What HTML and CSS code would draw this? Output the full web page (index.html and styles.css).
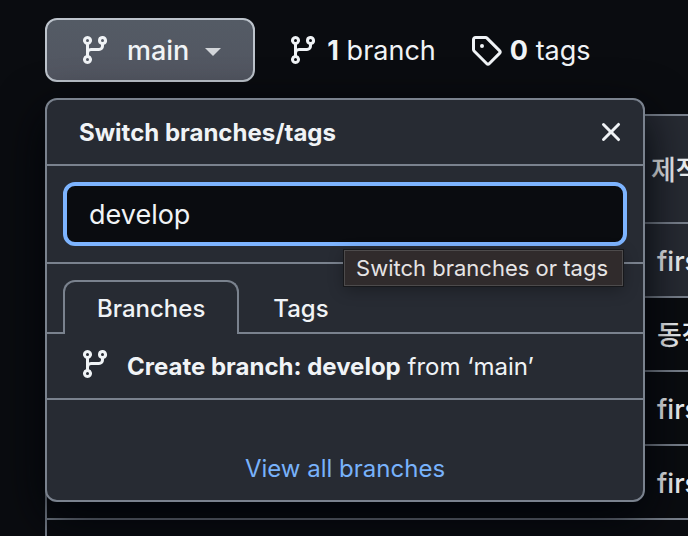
FILE: index.html
```html
<!DOCTYPE html>
<html lang="ko">
<head>
<meta charset="utf-8">
<meta name="viewport" content="width=device-width, initial-scale=1">
<title>Switch branches/tags</title>
<link rel="stylesheet" href="styles.css">
</head>
<body>
<svg class="sprite" aria-hidden="true">
  <symbol id="branch" viewBox="0 0 16 16"><path fill-rule="evenodd" d="M11.75 2.5a.75.75 0 100 1.5.75.75 0 000-1.5zm-2.25.75a2.25 2.25 0 113 2.122V6A2.5 2.5 0 0110 8.5H6a1 1 0 00-1 1v1.128a2.251 2.251 0 11-1.5 0V5.372a2.25 2.25 0 111.5 0v1.836A2.492 2.492 0 016 7h4a1 1 0 001-1v-.628A2.25 2.25 0 019.5 3.25zM4.25 12a.75.75 0 100 1.5.75.75 0 000-1.5zM3.5 3.25a.75.75 0 111.5 0 .75.75 0 01-1.5 0z"/></symbol>
  <symbol id="tag" viewBox="0 0 16 16"><path fill-rule="evenodd" d="M2.5 7.775V2.75a.25.25 0 01.25-.25h5.025a.25.25 0 01.177.073l6.25 6.25a.25.25 0 010 .354l-5.025 5.025a.25.25 0 01-.354 0l-6.25-6.25a.25.25 0 01-.073-.177zm-1.5 0V2.75C1 1.784 1.784 1 2.75 1h5.025c.464 0 .91.184 1.238.513l6.25 6.25a1.75 1.75 0 010 2.474l-5.026 5.026a1.75 1.75 0 01-2.474 0l-6.25-6.25A1.75 1.75 0 011 7.775zM6 5a1 1 0 100 2 1 1 0 000-2z"/></symbol>
  <symbol id="close" viewBox="0 0 16 16"><path fill-rule="evenodd" d="M3.72 3.72a.75.75 0 011.06 0L8 6.94l3.22-3.22a.75.75 0 111.06 1.06L9.06 8l3.22 3.22a.75.75 0 11-1.06 1.06L8 9.06l-3.22 3.22a.75.75 0 01-1.06-1.06L6.94 8 3.72 4.78a.75.75 0 010-1.06z"/></symbol>
</svg>
<main class="repo">
  <div class="toolbar">
    <button class="branch-button" type="button" aria-haspopup="true" aria-expanded="true">
      <svg class="icon"><use href="#branch"/></svg>
      <span class="label">main</span>
      <span class="caret"></span>
    </button>
    <nav class="counts">
      <a class="count" href="#branches"><svg class="icon"><use href="#branch"/></svg><span class="label"><strong>1</strong> branch</span></a>
      <a class="count" href="#tags"><svg class="icon"><use href="#tag"/></svg><span class="label"><strong>0</strong> tags</span></a>
    </nav>
  </div>

  <section class="popover" aria-labelledby="popover-title">
    <header class="popover-header">
      <h2 class="label" id="popover-title">Switch branches/tags</h2>
      <button class="close" type="button" aria-label="Close"><svg class="icon"><use href="#close"/></svg></button>
    </header>
    <div class="filter">
      <input type="text" value="develop" aria-label="Find or create a branch">
      <div class="tooltip" role="tooltip">Switch branches or tags</div>
    </div>
    <div class="tabs" role="tablist">
      <button class="tab tab-selected" type="button" role="tab" aria-selected="true">Branches</button>
      <button class="tab" type="button" role="tab" aria-selected="false">Tags</button>
    </div>
    <button class="create" type="button">
      <svg class="icon"><use href="#branch"/></svg>
      <span class="label"><strong>Create branch: develop</strong> from ‘main’</span>
    </button>
    <footer class="popover-footer"><a href="#all">View all branches</a></footer>
  </section>

  <table class="files">
    <thead>
      <tr><th class="name"></th><th class="message">제작</th></tr>
    </thead>
    <tbody>
      <tr class="shaded"><td></td><td>first</td></tr>
      <tr><td></td><td>동작</td></tr>
      <tr><td></td><td>first</td></tr>
      <tr><td></td><td>first</td></tr>
      <tr class="spacer"><td></td><td></td></tr>
    </tbody>
  </table>
</main>
</body>
</html>
```
FILE: styles.css
```css
:root {
  --bg: #0a0c10;
  --panel: #272b33;
  --line: #7a828e;
  --text: #f0f3f6;
  --accent: #78b2fb;
  --focus: #7db4ff;
}

* { box-sizing: border-box; }

html, body { height: 100%; overflow: hidden; }

body {
  margin: 0;
  background: var(--bg);
  color: var(--text);
  font-family: Inter, "Noto Sans CJK KR", sans-serif;
  font-size: 24px;
  line-height: 32px;
}

button, input { font: inherit; color: inherit; }

button {
  margin: 0;
  padding: 0;
  border: 0;
  background: none;
  text-align: left;
}

a { color: inherit; text-decoration: none; }

strong { font-weight: 700; }

.sprite { display: none; }

.icon {
  flex: none;
  width: 32px;
  height: 32px;
  fill: currentColor;
}

.label { padding-top: 2px; }

.repo {
  display: flex;
  flex-direction: column;
  position: relative;
  height: 100%;
  padding: 18px 0 0 45px;
}

.toolbar {
  display: flex;
  flex: none;
  align-items: center;
  gap: 32px;
  height: 64px;
  font-size: 27px;
}

.branch-button {
  display: flex;
  align-items: center;
  height: 64px;
  padding: 0 32px;
  border: 2px solid #bdc4cc;
  border-radius: 12px;
  background: linear-gradient(#545b65, #525661);
  font-weight: 500;
}

.branch-button .icon { margin-right: 16px; }

.caret {
  margin: 4px 0 0 16px;
  border: 8px solid transparent;
  border-top-color: #d3d6da;
  border-bottom: 0;
}

.counts { display: flex; gap: 34px; }

.count {
  display: flex;
  align-items: center;
  gap: 8px;
}

.popover {
  position: absolute;
  top: 98px;
  left: 45px;
  width: 600px;
  border: 2px solid var(--line);
  border-radius: 12px;
  background: var(--panel);
  box-shadow: 0 16px 48px #010409;
}

.popover-header {
  display: flex;
  align-items: center;
  justify-content: space-between;
  height: 66px;
  padding: 0 16px 0 32px;
  border-bottom: 2px solid var(--line);
}

.popover-header h2 {
  margin: 0;
  font-size: 24px;
  font-weight: 700;
}

.close { display: flex; }

.filter {
  position: relative;
  padding: 16px;
  border-bottom: 2px solid var(--line);
}

.filter input {
  display: block;
  width: 100%;
  height: 64px;
  padding: 0 22px;
  border: 4px solid var(--focus);
  border-radius: 12px;
  outline: 0;
  background: var(--bg);
  font-size: 27px;
}

.tooltip {
  position: absolute;
  top: 84px;
  right: 20px;
  z-index: 1;
  padding: 1px 14px 1px 11px;
  border: 1px solid #4d4b4c;
  outline: 1px solid #17181b;
  background: #302b2c;
  box-shadow: 0 4px 16px rgba(0, 0, 0, 0.3);
  color: #e6e4e5;
  font-size: 22px;
  white-space: nowrap;
}

.tabs {
  display: flex;
  padding: 16px 16px 0;
  box-shadow: inset 0 -2px var(--line);
}

.tab {
  padding: 11px 32px 9px;
  border: 2px solid transparent;
  border-bottom: 0;
  border-radius: 12px 12px 0 0;
  font-weight: 500;
}

.tab-selected {
  border-color: var(--line);
  background: var(--panel);
}

.create {
  display: flex;
  align-items: center;
  gap: 16px;
  width: 100%;
  height: 66px;
  padding: 0 32px;
  border-bottom: 2px solid var(--line);
}

.create .icon { margin-bottom: 4px; }

.popover-footer {
  padding: 53px 16px 15px;
  text-align: center;
}

.popover-footer a { color: var(--accent); }

.files {
  flex: none;
  width: 100%;
  margin-top: 32px;
  border-collapse: separate;
  border-spacing: 0;
  border: 2px solid var(--line);
  border-right: 0;
  border-bottom: 0;
  border-radius: 12px 0 0;
  table-layout: fixed;
  font-size: 27px;
  white-space: nowrap;
}

.files th, .files td {
  height: 74px;
  padding: 4px 0 0;
  border-bottom: 2px solid var(--line);
  font-weight: 500;
  text-align: left;
}

.files th { height: 108px; }

.files th, .files .shaded td { background: var(--panel); }

.files .name { width: 610px; }
.files .message { text-indent: -6px; }

.files .spacer td {
  height: 16px;
  border: 0;
}
```
